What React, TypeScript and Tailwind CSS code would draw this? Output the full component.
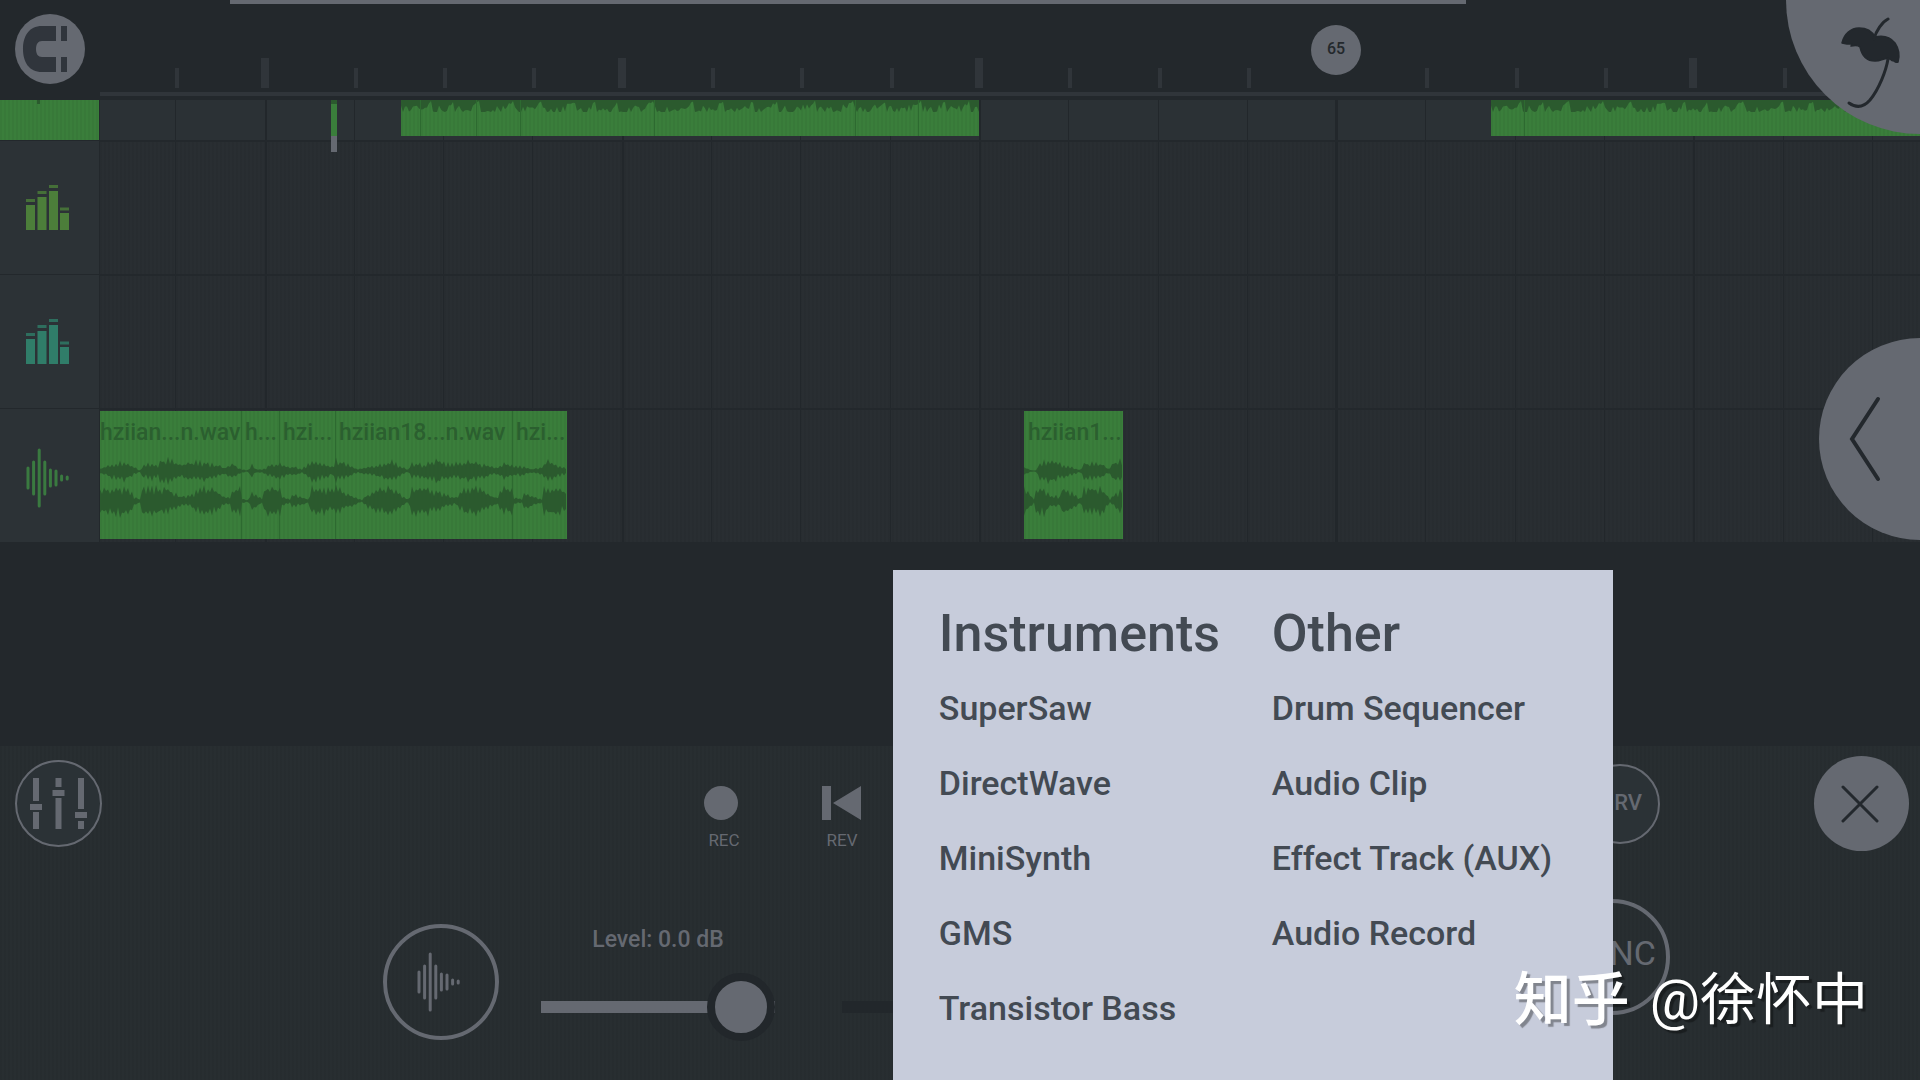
import React, { useState } from "react";

type Point = [number, number];

type Clip = {
  start: number;
  length: number;
  name?: string;
  flush?: boolean;
};

const TIMELINE_LENGTH = 1820;

const stripes =
  "bg-[repeating-linear-gradient(90deg,rgba(0,0,0,0.04)_0_2px,transparent_2px_4px)]";

const topClips = [
  { start: 301, length: 578, cuts: [19, 75, 119, 253, 454, 517] },
  { start: 1391, length: 429, cuts: [33] },
];

const clips: Clip[] = [
  { start: 0, length: 141, name: "hziian...n.wav", flush: true },
  { start: 141, length: 38, name: "h..." },
  { start: 179, length: 56, name: "hzi..." },
  { start: 235, length: 177, name: "hziian18...n.wav" },
  { start: 412, length: 55, name: "hzi..." },
  { start: 924, length: 99, name: "hziian1..." },
];

const longUpper: Point[] = [
  [0, 3], [10, 8], [24, 12], [30, 7], [40, 1], [42, 7], [52, 10], [58, 6], [60, 13], [70, 14],
  [80, 8], [95, 11], [105, 11], [125, 4], [133, 9], [141, 2], [149, 1], [151, 9], [156, 2],
  [163, 2], [170, 7], [180, 9], [190, 4], [195, 5], [202, 2], [207, 8], [213, 12], [225, 9],
  [233, 4], [236, 13], [245, 10], [258, 2], [270, 5], [282, 8], [292, 12], [300, 6], [309, 1],
  [311, 9], [325, 8], [329, 11], [338, 14], [350, 8], [362, 11], [375, 11], [395, 4], [405, 9],
  [413, 6], [420, 6], [432, 2], [441, 4], [447, 12], [455, 8], [467, 3],
];

const longLower: Point[] = [
  [0, 12], [8, 16], [27, 17], [34, 6], [41, 1], [42, 16], [58, 16], [59, 6], [61, 17], [68, 15],
  [80, 6], [90, 6], [100, 15], [112, 16], [125, 4], [130, 4], [133, 16], [140, 15], [142, 3],
  [149, 1], [151, 12], [156, 7], [163, 2], [165, 16], [180, 16], [181, 6], [190, 2], [193, 10],
  [200, 5], [208, 2], [211, 16], [222, 15], [233, 13], [236, 17], [245, 10], [262, 1], [265, 6],
  [277, 13], [294, 17], [300, 9], [309, 1], [311, 16], [325, 16], [327, 16], [340, 10], [356, 4],
  [365, 16], [380, 15], [397, 3], [402, 15], [413, 15], [414, 4], [422, 2], [425, 11], [432, 6],
  [443, 2], [444, 16], [455, 16], [467, 12],
];

const shortUpper: Point[] = [
  [0, 5], [8, 1], [12, 1], [13, 9], [25, 14], [35, 9], [45, 6], [57, 1], [59, 10], [78, 9],
  [85, 2], [90, 11], [99, 13],
];

const shortLower: Point[] = [
  [0, 15], [10, 3], [12, 15], [20, 16], [27, 6], [36, 6], [38, 15], [47, 11], [57, 2], [60, 15],
  [78, 16], [86, 2], [92, 9], [99, 15],
];

const noise = (n: number) => {
  const v = Math.sin(n * 12.9898) * 43758.5453;
  return v - Math.floor(v);
};

const levelAt = (points: Point[], x: number) => {
  const next = points.findIndex(([px]) => px >= x);
  if (next <= 0) return points[0][1];
  const [x0, a0] = points[next - 1];
  const [x1, a1] = points[next];
  return a0 + ((a1 - a0) * (x - x0)) / (x1 - x0);
};

const channelPath = (points: Point[], width: number, middle: number) => {
  const upper: string[] = [];
  const lower: string[] = [];
  for (let i = 0; i * 2 <= width; i += 1) {
    const x = i * 2;
    const level = levelAt(points, x);
    // every other sample dips, which gives the burst its teeth
    const base = i % 2 ? 0.35 : 0.7;
    const up = level * (base + 0.35 * noise(x + middle));
    const down = level * (base + 0.35 * noise(x * 3 + middle));
    upper.push(`${x},${(middle - up).toFixed(1)}`);
    lower.unshift(`${x},${(middle + down).toFixed(1)}`);
  }
  return `M${upper.join("L")}L${lower.join("L")}Z`;
};

const edgePath = (width: number) => {
  const edge: string[] = [];
  let start = 0;
  let period = 8;
  for (let x = 0; x <= width; x += 2) {
    if (x - start >= period) {
      start = x;
      period = 14 + Math.round(noise(x) * 26);
    }
    const t = (x - start) / period;
    const depth = Math.min(12, (1 - t * t * t) * 18 * (0.3 + 0.7 * noise(x * 7)));
    edge.push(`${x},${depth.toFixed(1)}`);
  }
  return `M0,0L${edge.join("L")}L${width},0Z`;
};

const percent = (value: number) => `${(value / TIMELINE_LENGTH) * 100}%`;

const beats = Array.from({ length: 20 }, (_, i) => i);

const beatWidth = (beat: number) => (beat === 19 ? "grow-[48]" : "grow-[89]");

const MagnetIcon = () => (
  <svg viewBox="0 0 70 70" className="size-full" fill="#30353c" aria-hidden="true">
    <path d="M41 12H27C14 12 8 22 8 35s6 23 19 23h14V43H27c-4 0-6-3-6-8s2-8 6-8h14z" />
    <path d="M46 12h6v15h-6zM46 43h6v15h-6z" />
  </svg>
);

const UmbrellaIcon = () => (
  <svg viewBox="0 0 64 96" className="h-24 w-16" aria-hidden="true">
    <path
      d="M2 30C4 21 11 15 19 15c8 0 13 3 16 9 9-2 16 1 20 6 4 6 5 12 3 19-2 1-3 0-4-1-2 0-3-1-4-2-5-2-8 2-15 2-9 0-13-5-15-14-2-2-5-2-9-1l1-2-5 0z"
      fill="#23282d"
      stroke="#23282d"
      strokeWidth="1.5"
      strokeLinejoin="round"
    />
    <path
      d="M34 26C36 18 42 9 48 6M48 46C46 58 39 76 30 87c-7 8-14 8-21 3"
      fill="none"
      stroke="#23282d"
      strokeWidth="3"
      strokeLinecap="round"
    />
  </svg>
);

const BarsIcon = ({ className }: { className: string }) => (
  <svg viewBox="0 0 44 46" className={`h-[46px] w-11 ${className}`} aria-hidden="true">
    <path
      fill="currentColor"
      d="M0 20h9v25H0zM11.500 12h9v33h-9zM23 6h9v39h-9zM34 28h9v17h-9z"
    />
    <path
      fill="currentColor"
      opacity="0.8"
      d="M0 14h9v3H0zM11.500 6h9v3h-9zM23 0h9v3h-9zM34 22.500h9v3h-9z"
    />
  </svg>
);

const VoiceIcon = ({ className }: { className: string }) => (
  <svg viewBox="0 0 44 60" className={`h-[60px] w-11 ${className}`} aria-hidden="true">
    <path
      d="M2 20v20M7.600 14v32M13.200 2v56M18.800 14v32M24.400 22v16M30 23v14M35.600 28v4M41.200 29v2"
      stroke="currentColor"
      strokeWidth="3"
      strokeLinecap="round"
    />
  </svg>
);

const MixerIcon = () => (
  <svg viewBox="0 0 57 52" className="h-[52px] w-[57px]" fill="#656971" aria-hidden="true">
    <path d="M3 0h6v23H3zM0 26h12v6H0zM3 34h6v17H3z" />
    <path d="M25.500 0h6v9h-6zM22.500 12h12v6h-12zM25.500 20h6v31h-6z" />
    <path d="M48 0h6v31h-6zM45 34h12v6H45zM48 43h6v8h-6z" />
  </svg>
);

const GridLines = () => (
  <div className="absolute inset-0 flex" aria-hidden="true">
    <div className="grow-[75] basis-0" />
    {beats.map((beat) => (
      <div key={beat} className={`basis-0 ${beatWidth(beat)}`}>
        <div
          className={`h-full bg-[#22272b] ${
            beat === 13 ? "-ml-px w-[3px]" : beat % 4 === 1 ? "w-0.5" : "w-px"
          }`}
        />
      </div>
    ))}
  </div>
);

const Ruler = () => (
  <div className="mt-14 flex h-8 items-end" aria-hidden="true">
    <div className="grow-[75] basis-0" />
    {beats.map((beat) => (
      <div key={beat} className={`basis-0 ${beatWidth(beat)}`}>
        {beat % 4 !== 1 && <div className="h-5 w-1 bg-[#30353a]" />}
        {beat % 4 === 1 && beat !== 13 && (
          <div className="-ml-1 h-[30px] w-2 bg-[#30353a]" />
        )}
      </div>
    ))}
  </div>
);

const TopLane = () => (
  <div className="flex h-10">
    <div className={`w-[99px] bg-[#3a7e3b] ${stripes}`}>
      <div className="ml-[37px] h-1 w-[3px] bg-[#2b5a2e]" />
    </div>
    <div className="relative ml-px flex-1 bg-[#2b3135]">
      <GridLines />
      <div
        className="absolute top-0 z-10 h-[52px] w-1.5 bg-[#656971]"
        style={{ left: percent(231) }}
      >
        <div className="h-9 border-t-4 border-[#2b5a2e] bg-[#3a7e3b]" />
      </div>
      {topClips.map((clip) => (
        <div
          key={clip.start}
          className="absolute top-0 h-9 bg-[#3a7e3b]"
          style={{ left: percent(clip.start), width: percent(clip.length) }}
        >
          <svg
            viewBox={`0 0 ${clip.length} 36`}
            preserveAspectRatio="none"
            className={`size-full ${stripes}`}
            aria-hidden="true"
          >
            <path d={edgePath(clip.length)} fill="#2b5a2e" />
            {clip.cuts.map((cut) => (
              <path key={cut} d={`M${cut}.5 0v36`} stroke="#2d6a30" />
            ))}
          </svg>
        </div>
      ))}
    </div>
  </div>
);

const Lane = ({ icon, children }: { icon: React.ReactNode; children?: React.ReactNode }) => (
  <div className="flex h-[134px]">
    <div className="flex w-[99px] items-center border-t border-[#23282c] bg-[#2c3236] pl-[26px]">
      {icon}
    </div>
    <div
      className={`relative ml-px flex-1 border-t-2 border-[#23282c] bg-[#292e32] ${stripes}`}
    >
      <GridLines />
      {children}
    </div>
  </div>
);

const Waveform = ({ start, width, upper, lower }: {
  start: number;
  width: number;
  upper: Point[];
  lower: Point[];
}) => (
  <svg
    viewBox={`0 0 ${width} 128`}
    preserveAspectRatio="none"
    className="absolute top-px h-32"
    style={{ left: percent(start), width: percent(width) }}
    aria-hidden="true"
  >
    <path d={channelPath(upper, width, 60)} fill="#2b5a2e" />
    <path d={channelPath(lower, width, 90)} fill="#2b5a2e" />
  </svg>
);

const TransportButton = ({ label, children }: { label: string; children: React.ReactNode }) => (
  <button className="flex w-10 flex-col items-start gap-2.5 font-normal">
    {children}
    <span className="self-center text-[17px] leading-5">{label}</span>
  </button>
);

const rangeClasses =
  "h-[68px] w-[234px] appearance-none bg-transparent [&::-webkit-slider-runnable-track]:h-3 [&::-webkit-slider-thumb]:-mt-7 [&::-webkit-slider-thumb]:size-[68px] [&::-webkit-slider-thumb]:appearance-none [&::-webkit-slider-thumb]:rounded-full [&::-webkit-slider-thumb]:border-8 [&::-webkit-slider-thumb]:border-[#22272b] [&::-webkit-slider-thumb]:bg-[#656971]";

const MenuColumn = ({ title, items }: { title: string; items: string[] }) => (
  <section>
    <h2 className="text-[52px] leading-[60px]">{title}</h2>
    <ul className="mt-1.5">
      {items.map((item) => (
        <li key={item}>
          <button className="h-[75px] text-[34px] leading-10">{item}</button>
        </li>
      ))}
    </ul>
  </section>
);

const App = () => {
  const [level, setLevel] = useState(100);
  const [pan, setPan] = useState(100);

  return (
    <div className="relative flex min-h-screen flex-col overflow-hidden bg-[#23282c] font-['Roboto','Noto_Sans_CJK_SC',sans-serif] font-medium text-[#656971]">
      <div className="absolute left-[12%] top-0 h-1 w-[1236px] bg-[#656971]" />

      <header className="flex h-[100px]">
        <div className="w-[100px] pl-[15px] pt-3.5">
          <button aria-label="Snap" className="block size-[70px] rounded-full bg-[#656971]">
            <MagnetIcon />
          </button>
        </div>
        <div className="relative flex-1">
          <Ruler />
          <div className="mt-1 h-1 bg-[#30353a]" />
          <div
            className="absolute top-[25px] flex size-[50px] -translate-x-1/2 items-center justify-center rounded-full bg-[#656971] pb-0.5 text-base text-[#23282c]"
            style={{ left: percent(1236) }}
          >
            65
          </div>
        </div>
      </header>

      <main>
        <TopLane />
        <Lane icon={<BarsIcon className="text-[#4c7e3a]" />} />
        <Lane icon={<BarsIcon className="text-[#307d69]" />} />
        <Lane icon={<VoiceIcon className="mt-1 text-[#3a7a40]" />}>
          {clips.map((clip) => (
            <div
              key={clip.start}
              className={`absolute top-px h-32 overflow-hidden bg-[#3a7e3b] pt-2 text-[23px] leading-7 whitespace-nowrap text-[#2b5f2f] ${stripes} ${
                clip.flush ? "" : "pl-1"
              } ${clip.start > 0 && clip.start < 500 ? "shadow-[inset_1px_0_#2d6a30]" : ""}`}
              style={{ left: percent(clip.start), width: percent(clip.length) }}
            >
              {clip.name}
            </div>
          ))}
          <Waveform start={0} width={467} upper={longUpper} lower={longLower} />
          <Waveform start={924} width={99} upper={shortUpper} lower={shortLower} />
        </Lane>
      </main>

      <button
        aria-label="Open menu"
        className="absolute right-0 top-0 flex h-[134px] w-[134px] justify-end rounded-bl-full bg-[#656971] pr-4 pt-[13px]"
      >
        <UmbrellaIcon />
      </button>
      <button
        aria-label="Open panel"
        className="absolute right-0 top-[338px] flex h-[202px] w-[101px] items-center rounded-l-full bg-[#656971] pl-[30px]"
      >
        <svg viewBox="0 0 32 86" className="h-[86px] w-8" fill="none" aria-hidden="true">
          <path d="M29 3 3 43l26 40" stroke="#23282d" strokeWidth="4" strokeLinecap="round" />
        </svg>
      </button>

      <footer className={`mt-auto h-[335px] border-t border-[#23282c] bg-[#282e31] ${stripes}`}>
        <div className="flex pl-[15px] pr-[11px] pt-2.5">
          <button
            aria-label="Mixer"
            className="mt-1 flex size-[87px] items-center justify-center rounded-full border-2 border-[#656971] bg-[#2b3236]"
          >
            <MixerIcon />
          </button>
          <div className="ml-[602px] mt-[30px] flex gap-[78px]">
            <TransportButton label="REC">
              <span className="size-[34px] rounded-full bg-[#656971]" />
            </TransportButton>
            <TransportButton label="REV">
              <svg viewBox="0 0 40 34" className="h-[34px] w-10" fill="#656971" aria-hidden="true">
                <path d="M0 0h9v34H0zM39 0v34L11 17z" />
              </svg>
            </TransportButton>
          </div>
          <button className="ml-auto mr-[154px] mt-2 flex size-20 items-center justify-end rounded-full border-2 border-[#656971] bg-[#2b3236] pb-1 pr-4 text-[22px]">
            RV
          </button>
          <button
            aria-label="Close"
            className="flex size-[95px] items-center justify-center rounded-full bg-[#656971] pr-1"
          >
            <svg viewBox="0 0 38 38" className="size-[38px]" aria-hidden="true">
              <path d="M2 2l34 34M36 2 2 36" stroke="#23282d" strokeWidth="3" strokeLinecap="round" />
            </svg>
          </button>
        </div>

        <div className="flex items-start pl-[383px] pt-12">
          <button
            aria-label="Clip source"
            className="mt-[25px] flex size-[116px] items-center justify-center rounded-full border-4 border-[#656971] pr-1"
          >
            <VoiceIcon className="text-[#656971]" />
          </button>
          <div className="ml-[42px] mt-[25px] flex flex-col">
            <label htmlFor="level" className="self-center text-[23px] leading-8">
              Level: 0.0 dB
            </label>
            <input
              id="level"
              type="range"
              value={level}
              onChange={(e) => setLevel(Number(e.target.value))}
              className={`mt-[17px] [&::-webkit-slider-runnable-track]:bg-[#656971] ${rangeClasses}`}
            />
          </div>
          <input
            type="range"
            aria-label="Pan"
            value={pan}
            onChange={(e) => setPan(Number(e.target.value))}
            className={`ml-[67px] mt-[74px] [&::-webkit-slider-runnable-track]:bg-[#22272b] ${rangeClasses}`}
          />
          <button className="ml-auto mr-[250px] flex size-[116px] items-center justify-end rounded-full border-4 border-[#656971] pb-2 pr-2.5 text-[34px] font-normal">
            NC
          </button>
        </div>
      </footer>

      <div className="absolute bottom-0 left-[46.5%] grid h-[510px] w-[720px] grid-cols-[279px_1fr] gap-x-[54px] bg-[#c7ccdb] pl-[46px] pt-[34px] text-[#434a53]">
        <MenuColumn
          title="Instruments"
          items={["SuperSaw", "DirectWave", "MiniSynth", "GMS", "Transistor Bass"]}
        />
        <MenuColumn
          title="Other"
          items={["Drum Sequencer", "Audio Clip", "Effect Track (AUX)", "Audio Record"]}
        />
      </div>

      <div className="absolute bottom-10 right-[52px] flex items-center gap-5 text-[56px] leading-[80px] whitespace-nowrap text-white [text-shadow:3px_3px_1px_rgba(0,0,0,0.35)]">
        <span className="text-[58px]">知乎</span>
        <span className="font-normal">@徐怀中</span>
      </div>
    </div>
  );
};

export default App;
